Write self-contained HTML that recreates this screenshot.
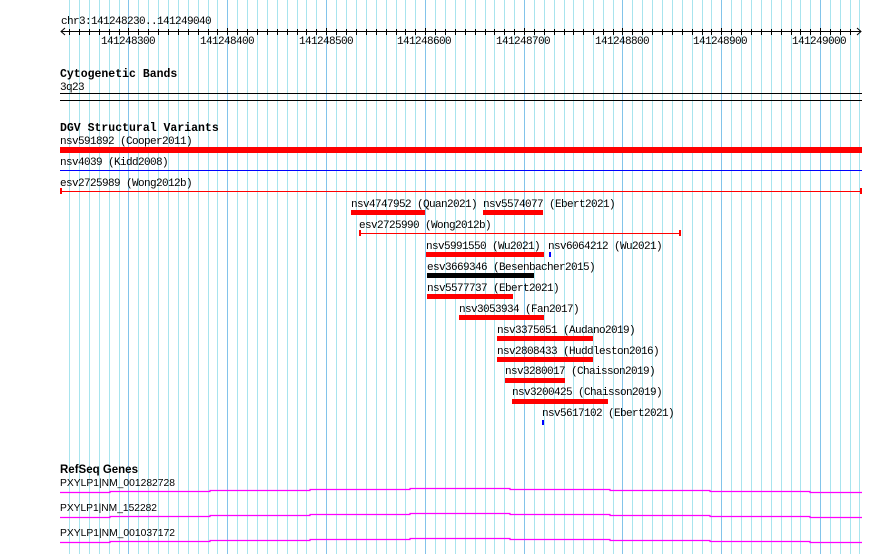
<!DOCTYPE html>
<html><head><style>
html,body{margin:0;padding:0;background:#fff;}
#c{position:relative;width:890px;height:554px;overflow:hidden;background:#fff;}
svg{position:absolute;left:0;top:0;}
text{font-family:"Liberation Mono",monospace;font-size:11px;letter-spacing:-0.6px;fill:#000;}
.b{font-weight:bold;font-size:11.5px;letter-spacing:0;}
.s{font-family:"Liberation Sans",sans-serif;font-size:10.3px;letter-spacing:0;}
</style></head><body><div id="c">
<svg width="890" height="554">
<path stroke="#a8e4ee" stroke-width="1" d="
M69.5 0V554M79.5 0V554M89.5 0V554M99.5 0V554M109.5 0V554M119.5 0V554M138.5 0V554M148.5 0V554M158.5 0V554M168.5 0V554M178.5 0V554M188.5 0V554M198.5 0V554M208.5 0V554M217.5 0V554
M237.5 0V554M247.5 0V554M257.5 0V554M267.5 0V554M277.5 0V554M287.5 0V554M297.5 0V554M306.5 0V554M316.5 0V554
M336.5 0V554M346.5 0V554M356.5 0V554M366.5 0V554M376.5 0V554M386.5 0V554M396.5 0V554M405.5 0V554M415.5 0V554
M435.5 0V554M445.5 0V554M455.5 0V554M465.5 0V554M475.5 0V554M485.5 0V554M494.5 0V554M504.5 0V554M514.5 0V554
M534.5 0V554M544.5 0V554M554.5 0V554M564.5 0V554M573.5 0V554M583.5 0V554M593.5 0V554M603.5 0V554M613.5 0V554
M632.5 0V554M642.5 0V554M652.5 0V554M662.5 0V554M672.5 0V554M682.5 0V554M692.5 0V554M702.5 0V554M711.5 0V554
M731.5 0V554M741.5 0V554M751.5 0V554M761.5 0V554M771.5 0V554M781.5 0V554M791.5 0V554M800.5 0V554M810.5 0V554
M830.5 0V554M840.5 0V554M850.5 0V554M859.5 0V554"/>
<g stroke="#82c4ea" stroke-width="1">
<line x1="128.5" y1="0" x2="128.5" y2="554"/><line x1="227.5" y1="0" x2="227.5" y2="554"/>
<line x1="326.5" y1="0" x2="326.5" y2="554"/><line x1="425.5" y1="0" x2="425.5" y2="554"/>
<line x1="524.5" y1="0" x2="524.5" y2="554"/><line x1="622.5" y1="0" x2="622.5" y2="554"/>
<line x1="721.5" y1="0" x2="721.5" y2="554"/><line x1="820.5" y1="0" x2="820.5" y2="554"/>
</g>
<text x="61" y="24">chr3:141248230..141249040</text>
<line x1="61" y1="31.5" x2="861" y2="31.5" stroke="#000"/>
<path d="M65 28 L61 31.5 L65 35 M857 28 L861 31.5 L857 35" stroke="#000" fill="none"/>
<path stroke="#000" stroke-width="1" d="
M69.5 29v6M79.5 29v6M89.5 29v6M99.5 29v6M109.5 29v6M119.5 29v6M128.5 28v7M138.5 29v6M148.5 29v6M158.5 29v6M168.5 29v6M178.5 29v6M188.5 29v6M198.5 29v6M208.5 29v6M217.5 29v6M227.5 28v7
M237.5 29v6M247.5 29v6M257.5 29v6M267.5 29v6M277.5 29v6M287.5 29v6M297.5 29v6M306.5 29v6M316.5 29v6M326.5 28v7
M336.5 29v6M346.5 29v6M356.5 29v6M366.5 29v6M376.5 29v6M386.5 29v6M396.5 29v6M405.5 29v6M415.5 29v6M425.5 28v7
M435.5 29v6M445.5 29v6M455.5 29v6M465.5 29v6M475.5 29v6M485.5 29v6M494.5 29v6M504.5 29v6M514.5 29v6M524.5 28v7
M534.5 29v6M544.5 29v6M554.5 29v6M564.5 29v6M573.5 29v6M583.5 29v6M593.5 29v6M603.5 29v6M613.5 29v6M622.5 28v7
M632.5 29v6M642.5 29v6M652.5 29v6M662.5 29v6M672.5 29v6M682.5 29v6M692.5 29v6M702.5 29v6M711.5 29v6M721.5 28v7
M731.5 29v6M741.5 29v6M751.5 29v6M761.5 29v6M771.5 29v6M781.5 29v6M791.5 29v6M800.5 29v6M810.5 29v6M820.5 28v7
M830.5 29v6M840.5 29v6M850.5 29v6"/>
<text x="101" y="44">141248300</text><text x="200" y="44">141248400</text>
<text x="299" y="44">141248500</text><text x="397" y="44">141248600</text>
<text x="496" y="44">141248700</text><text x="595" y="44">141248800</text>
<text x="693" y="44">141248900</text><text x="792" y="44">141249000</text>
<text class="b" x="60" y="77">Cytogenetic Bands</text>
<text x="60" y="90">3q23</text>
<rect x="60" y="93" width="802" height="1"/><rect x="60" y="100" width="802" height="1"/>
<text class="b" x="60" y="131">DGV Structural Variants</text>
<text x="60" y="144">nsv591892 (Cooper2011)</text>
<rect x="60" y="147" width="802" height="6" fill="#f00"/>
<text x="60" y="165">nsv4039 (Kidd2008)</text>
<rect x="60" y="170" width="802" height="1" fill="#00f"/>
<text x="60" y="186">esv2725989 (Wong2012b)</text>
<rect x="60" y="191" width="802" height="1" fill="#f00"/>
<rect x="60" y="188" width="2" height="6" fill="#f00"/><rect x="860" y="188" width="2" height="6" fill="#f00"/>
<text x="351" y="207">nsv4747952 (Quan2021)</text><rect x="351" y="210" width="74" height="5" fill="#f00"/>
<text x="483" y="207">nsv5574077 (Ebert2021)</text><rect x="483" y="210" width="60" height="5" fill="#f00"/>
<text x="359" y="228">esv2725990 (Wong2012b)</text>
<rect x="360" y="233" width="320" height="1" fill="#f00"/>
<rect x="359" y="230" width="2" height="6" fill="#f00"/><rect x="679" y="230" width="2" height="6" fill="#f00"/>
<text x="426" y="249">nsv5991550 (Wu2021)</text><rect x="426" y="252" width="118" height="5" fill="#f00"/>
<text x="548" y="249">nsv6064212 (Wu2021)</text><rect x="549" y="252" width="2" height="5" fill="#00f"/>
<text x="427" y="270">esv3669346 (Besenbacher2015)</text><rect x="427" y="273" width="107" height="5" fill="#000"/>
<text x="427" y="291">nsv5577737 (Ebert2021)</text><rect x="427" y="294" width="86" height="5" fill="#f00"/>
<text x="459" y="312">nsv3053934 (Fan2017)</text><rect x="459" y="315" width="85" height="5" fill="#f00"/>
<text x="497" y="333">nsv3375051 (Audano2019)</text><rect x="497" y="336" width="96" height="5" fill="#f00"/>
<text x="497" y="354">nsv2808433 (Huddleston2016)</text><rect x="497" y="357" width="96" height="5" fill="#f00"/>
<text x="505" y="374">nsv3280017 (Chaisson2019)</text><rect x="505" y="378" width="60" height="5" fill="#f00"/>
<text x="512" y="395">nsv3200425 (Chaisson2019)</text><rect x="512" y="399" width="96" height="5" fill="#f00"/>
<text x="542" y="416">nsv5617102 (Ebert2021)</text><rect x="542" y="420" width="2" height="5" fill="#00f"/>
<text class="s" x="60" y="473" style="font-weight:bold;font-size:11.5px">RefSeq Genes</text>
<text class="s" x="60" y="486" textLength="115" lengthAdjust="spacingAndGlyphs">PXYLP1|NM_001282728</text>
<text class="s" x="60" y="511" textLength="97" lengthAdjust="spacingAndGlyphs">PXYLP1|NM_152282</text>
<text class="s" x="60" y="536" textLength="115" lengthAdjust="spacingAndGlyphs">PXYLP1|NM_001037172</text>
<g fill="none" stroke="#f0f" stroke-width="1.2">
<path d="M60 492.5H110V491.5H210V490.5H310V489.5H410V488.5H510V489.5H610V490.5H710V491.5H810V492.5H862"/>
<path d="M60 517.5H110V516.5H210V515.5H310V514.5H410V513.5H510V514.5H610V515.5H710V516.5H810V517.5H862"/>
<path d="M60 542.5H110V541.5H210V540.5H310V539.5H410V538.5H510V539.5H610V540.5H710V541.5H810V542.5H862"/>
</g>
</svg>
</div></body></html>
